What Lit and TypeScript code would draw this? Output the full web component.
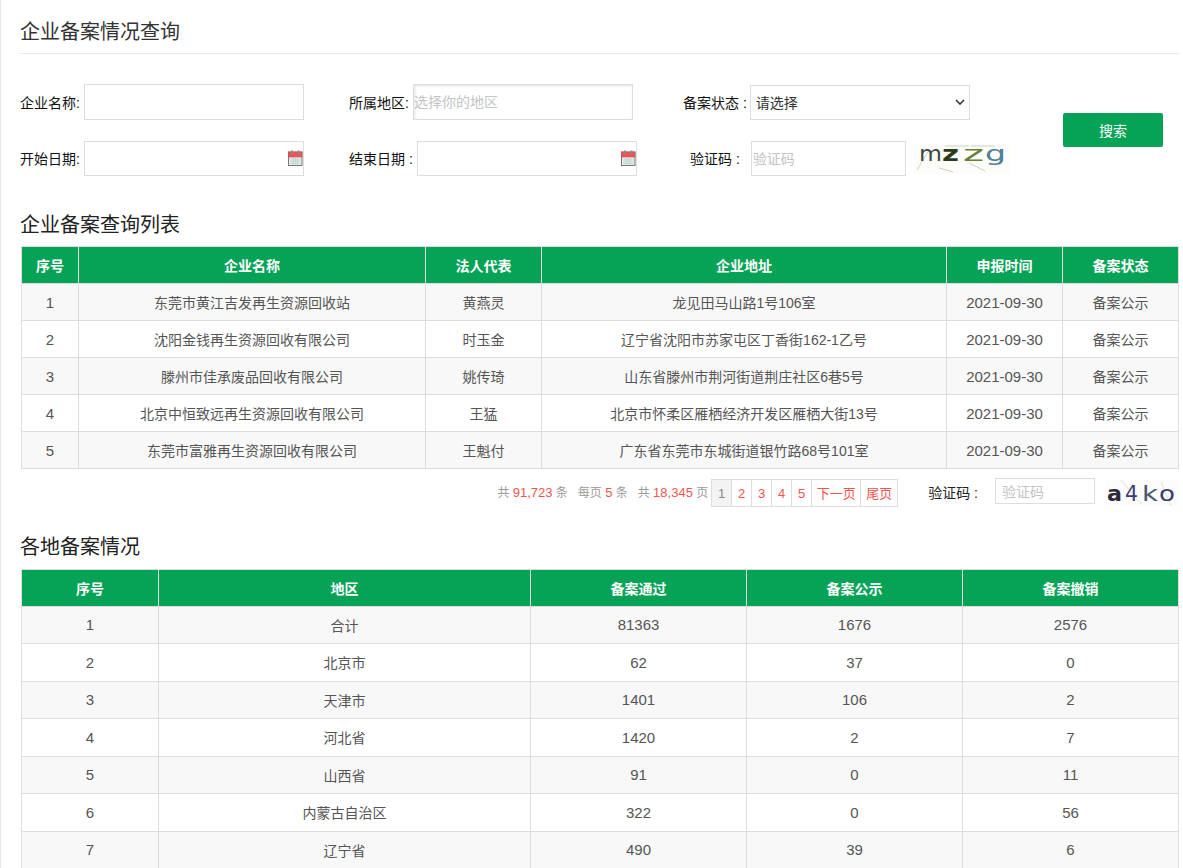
import { LitElement, html, css, svg } from "lit";
import { customElement } from "lit/decorators.js";

const calendar = html`<svg class="cal" viewBox="0 0 15 16" width="15" height="16" aria-hidden="true">
  <rect x="0.5" y="2" width="13.5" height="13.5" fill="#e8eeea" stroke="#777"/>
  <rect x="0.5" y="2" width="13.5" height="5" fill="#e8555a" stroke="#d9484e" stroke-width="0.6"/>
  <rect x="3" y="0.5" width="2" height="3.5" fill="#8a8a8a"/>
  <rect x="9.5" y="0.5" width="2" height="3.5" fill="#8a8a8a"/>
  <path d="M2 9h10.5M2 11.2h10.5M2 13.4h10.5M5 8v6.5M7.3 8v6.5M9.6 8v6.5" stroke="#b9d3cf" stroke-width="0.8" fill="none"/>
</svg>`;

const chevron = html`<svg class="chev" viewBox="0 0 10 6" width="10" height="6" aria-hidden="true"><path d="M1 1l4 4 4-4" fill="none" stroke="#333" stroke-width="1.6"/></svg>`;

const companies = [
  ["1", "东莞市黄江吉发再生资源回收站", "黄燕灵", "龙见田马山路1号106室"],
  ["2", "沈阳金钱再生资源回收有限公司", "时玉金", "辽宁省沈阳市苏家屯区丁香街162-1乙号"],
  ["3", "滕州市佳承废品回收有限公司", "姚传琦", "山东省滕州市荆河街道荆庄社区6巷5号"],
  ["4", "北京中恒致远再生资源回收有限公司", "王猛", "北京市怀柔区雁栖经济开发区雁栖大街13号"],
  ["5", "东莞市富雅再生资源回收有限公司", "王魁付", "广东省东莞市东城街道银竹路68号101室"],
];

const regions = [
  ["1", "合计", "81363", "1676", "2576"],
  ["2", "北京市", "62", "37", "0"],
  ["3", "天津市", "1401", "106", "2"],
  ["4", "河北省", "1420", "2", "7"],
  ["5", "山西省", "91", "0", "11"],
  ["6", "内蒙古自治区", "322", "0", "56"],
  ["7", "辽宁省", "490", "39", "6"],
];

@customElement("app-root")
export class AppRoot extends LitElement {
  static styles = css`
    :host {
      display: block;
      box-sizing: border-box;
      height: 868px;
      overflow: hidden;
      background: #fff;
      border-left: 1px solid #e6e6e6;
      padding: 0 4px 0 19px;
      font-family: "Liberation Sans", "Noto Sans CJK SC", sans-serif;
      font-size: 14px;
      color: #555;
    }
    .page-title {
      margin: 0;
      box-sizing: border-box;
      height: 54px;
      padding-top: 19px;
      font-size: 20px;
      line-height: 26px;
      font-weight: 400;
      color: #333;
      border-bottom: 1px solid #e8e8e8;
    }
    .form {
      display: flex;
      margin-top: 30px;
      height: 92px;
    }
    .fields {
      width: 1043px;
      display: grid;
      grid-template-columns: 329px 334px 1fr;
      grid-template-rows: 36px 35px;
      row-gap: 21px;
    }
    .field { display: flex; align-items: center; color: #111; }
    .field label { white-space: pre; margin-right: 4px; }
    .field label.tight { margin-right: 3px; }
    .low label { margin-bottom: 2px; }
    .box {
      box-sizing: border-box;
      height: 100%;
      border: 1px solid #ddd;
      background: #fff;
      position: relative;
      display: flex;
      align-items: center;
    }
    .w220 { width: 220px; }
    .ph { color: #c4c4c4; padding-bottom: 2px; }
    .area { box-shadow: inset 1px 1px 3px rgba(0,0,0,0.12); }
    .cal { position: absolute; right: 0; top: 8px; }
    .select {
      color: #333;
      padding: 0 4px 2px 5px;
      justify-content: space-between;
      margin-top: 1px;
      height: 35px;
    }
    .code-field { padding-left: 7px; }
    .code-field label { margin-right: 11px; }
    .code-box { width: 155px; padding-left: 1px; }
    .captcha { margin-left: 9px; display: block; overflow: visible; }
    .search {
      align-self: flex-start;
      margin-top: 29px;
      width: 100px;
      height: 34px;
      background: #06a357;
      color: #fff;
      display: flex;
      align-items: center;
      justify-content: center;
      border-radius: 2px;
      font-size: 14px;
    }
    .section {
      margin: 0;
      font-size: 20px;
      line-height: 26px;
      font-weight: 400;
      color: #222;
    }
    .s1 { margin-top: 36px; }
    .s2 { margin-top: 27px; }
    table {
      border-collapse: collapse;
      table-layout: fixed;
      width: 1157px;
      margin-left: 1px;
      text-align: center;
    }
    .t1 { margin-top: 8px; }
    .t2 { margin-top: 8.5px; }
    .t1 col:nth-child(1) { width: 57px; }
    .t1 col:nth-child(2) { width: 347px; }
    .t1 col:nth-child(3) { width: 116px; }
    .t1 col:nth-child(4) { width: 405px; }
    .t1 col:nth-child(5) { width: 116px; }
    .t1 col:nth-child(6) { width: 116px; }
    .t2 col:nth-child(1) { width: 137px; }
    .t2 col:nth-child(2) { width: 372px; }
    .t2 col:nth-child(3) { width: 216px; }
    .t2 col:nth-child(4) { width: 216px; }
    .t2 col:nth-child(5) { width: 216px; }
    th, td { border: 1px solid #ddd; padding: 0; }
    th { background: #06a357; color: #fff; font-weight: 700; height: 36px; }
    .t1 td { height: 36px; }
    .t2 td { height: 36.5px; }
    td.num { font-size: 15px; }
    tbody tr:nth-child(odd) td { background: #f8f8f8; }
    .pager {
      display: flex;
      align-items: center;
      justify-content: flex-end;
      height: 28px;
      margin-top: 10px;
      font-size: 12px;
      color: #999;
    }
    .stat { margin-right: 10px; white-space: nowrap; margin-top: -3px; }
    .stat.last { margin-right: 3px; }
    .red { color: #f4544f; font-size: 13px; }
    .pages { display: flex; height: 28px; border: 1px solid #ddd; border-right: 0; box-sizing: border-box; font-size: 13px; }
    .pages span {
      box-sizing: border-box;
      border-right: 1px solid #ddd;
      padding: 0 5px;
      text-align: center;
      line-height: 27px;
      color: #f4544f;
    }
    .pages .d { width: 20px; padding: 0; }
    .pages .next { width: 49px; padding: 0; }
    .pages .cur { background: #f3f3f3; color: #888; }
    .pcode { margin-left: 30px; font-size: 14px; color: #222; white-space: pre; margin-top: -3px; }
    .pbox {
      box-sizing: border-box;
      width: 100px;
      height: 26px;
      border: 1px solid #ddd;
      margin-left: 17px;
      margin-top: -4px;
      padding-left: 6px;
      display: flex;
      align-items: center;
      font-size: 14px;
      color: #c4c4c4;
    }
    .cap2 { margin-left: 12px; display: block; overflow: visible; }
    text { font-family: "DejaVu Sans", sans-serif; }
  `;

  render() {
    return html`
      <h1 class="page-title">企业备案情况查询</h1>
      <div class="form">
        <div class="fields">
          <div class="field"><label>企业名称:</label><div class="box w220"></div></div>
          <div class="field"><label>所属地区:</label><div class="box w220 area ph">选择你的地区</div></div>
          <div class="field"><label class="tight">备案状态 :</label><div class="box w220 select">请选择${chevron}</div></div>
          <div class="field low"><label>开始日期:</label><div class="box w220">${calendar}</div></div>
          <div class="field low"><label>结束日期 :</label><div class="box w220">${calendar}</div></div>
          <div class="field low code-field"><label>验证码 :</label><div class="box code-box ph">验证码</div>
            <svg class="captcha" width="96" height="30" viewBox="0 0 96 30" role="img">
              <rect width="96" height="30" fill="#fcfdf9"/>
              <path d="M2 26L14 6M30 2h24M56 2h24M70 27L54 19M24 24l14 4" stroke="#c9d3c0" fill="none"/>
              ${svg`<g font-size="22">
                <text x="4" y="16.5" fill="#3a4a44" textLength="23" lengthAdjust="spacingAndGlyphs">m</text>
                <text x="27" y="16.5" fill="#2c3a1a" textLength="17" lengthAdjust="spacingAndGlyphs" font-weight="700">z</text>
                <text x="48" y="16.5" fill="#6a7f3a" textLength="21" lengthAdjust="spacingAndGlyphs">z</text>
                <text x="70" y="16.5" fill="#4f7f96" textLength="21" lengthAdjust="spacingAndGlyphs">g</text>
              </g>`}
            </svg>
          </div>
        </div>
        <div class="search">搜索</div>
      </div>

      <h2 class="section s1">企业备案查询列表</h2>
      <table class="t1">
        <colgroup><col/><col/><col/><col/><col/><col/></colgroup>
        <thead><tr><th>序号</th><th>企业名称</th><th>法人代表</th><th>企业地址</th><th>申报时间</th><th>备案状态</th></tr></thead>
        <tbody>
          ${companies.map((c) => html`<tr><td class="num">${c[0]}</td><td>${c[1]}</td><td>${c[2]}</td><td>${c[3]}</td><td class="num">2021-09-30</td><td>备案公示</td></tr>`)}
        </tbody>
      </table>

      <div class="pager">
        <span class="stat">共 <span class="red">91,723</span> 条</span>
        <span class="stat">每页 <span class="red">5</span> 条</span>
        <span class="stat last">共 <span class="red">18,345</span> 页</span>
        <div class="pages"><span class="d cur">1</span><span class="d">2</span><span class="d">3</span><span class="d">4</span><span class="d">5</span><span class="next">下一页</span><span>尾页</span></div>
        <span class="pcode">验证码 :</span>
        <div class="pbox">验证码</div>
        <svg class="cap2" width="72" height="26" viewBox="0 0 72 26" role="img">
          <rect width="72" height="26" fill="#fcfcfc"/>
          <path d="M14 0L34 24M54 2L64 26" stroke="#dfe3d0" fill="none"/>
          ${svg`<g font-size="22">
            <text x="0" y="20.5" fill="#2c2c3a" font-weight="700" textLength="15" lengthAdjust="spacingAndGlyphs">a</text>
            <text x="18" y="20.5" fill="#3e3a78" textLength="13" lengthAdjust="spacingAndGlyphs">4</text>
            <text x="35" y="20.5" fill="#4b5a6a" textLength="16" lengthAdjust="spacingAndGlyphs">k</text>
            <text x="52" y="20.5" fill="#3a3a6a" textLength="16" lengthAdjust="spacingAndGlyphs">o</text>
          </g>`}
        </svg>
      </div>

      <h2 class="section s2">各地备案情况</h2>
      <table class="t2">
        <colgroup><col/><col/><col/><col/><col/></colgroup>
        <thead><tr><th>序号</th><th>地区</th><th>备案通过</th><th>备案公示</th><th>备案撤销</th></tr></thead>
        <tbody>
          ${regions.map((r) => html`<tr>${r.map((v, i) => html`<td class=${i === 1 ? "" : "num"}>${v}</td>`)}</tr>`)}
        </tbody>
      </table>
    `;
  }
}
